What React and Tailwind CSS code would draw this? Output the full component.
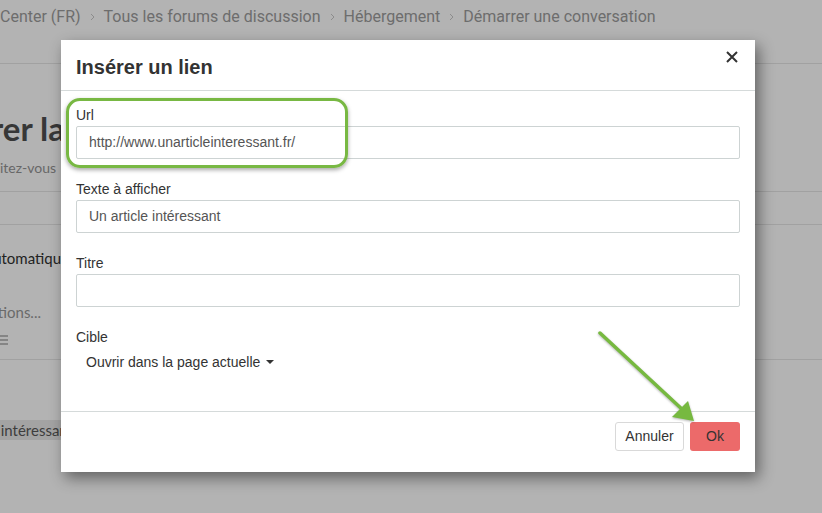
import React from 'react';

function Chevron() {
  return (
    <svg width="5" height="8" viewBox="0 0 5 8" className="mx-[9px] shrink-0">
      <path d="M1 1l3 3-3 3" fill="none" stroke="#8c8c8c" strokeWidth="1" />
    </svg>
  );
}

function Field({ label, value }) {
  return (
    <div className="mb-[20px]">
      <div className="h-[20px] leading-[20px] text-[14px] text-[#333] mb-[1px]">{label}</div>
      <div className="h-[33px] border border-[#cdd3d3] rounded-[2px] px-[12px] flex items-center text-[14px] text-[#555]">
        {value}
      </div>
    </div>
  );
}

export default function App() {
  const crumbs = ['Tous les forums de discussion', 'Hébergement', 'Démarrer une conversation'];

  return (
    <div className="relative w-[822px] h-[513px] overflow-hidden bg-[#b3b3b3]" style={{ fontFamily: 'Lato, "Liberation Sans", sans-serif' }}>
      {/* page behind the overlay */}
      <div className="h-[64px] border-b border-[#a1a1a1]">
        <div className="h-[34px] flex items-center text-[16px] text-[#6d6d6d] whitespace-nowrap" style={{ fontFamily: 'Roboto, sans-serif' }}>
          <span>Center (FR)</span>
          {crumbs.map((c) => (
            <React.Fragment key={c}>
              <Chevron />
              <span>{c}</span>
            </React.Fragment>
          ))}
        </div>
      </div>

      <div className="h-[128px] border-b border-[#a1a1a1] pt-[45px]">
        <div className="w-[65px] flex justify-end overflow-hidden whitespace-nowrap h-[38px] leading-[38px] text-[33px] font-bold text-[#373737]">
          Démarrer la
        </div>
        <div className="mt-[11px] w-[56px] flex justify-end overflow-hidden whitespace-nowrap h-[20px] leading-[20px] text-[14px] text-[#676767]">
          Invitez-vous
        </div>
      </div>

      <div className="h-[33px] border-b border-[#a1a1a1]" />

      <div className="h-[135px] border-b border-[#a1a1a1] pt-[23px]">
        <div className="w-[69px] flex justify-end overflow-hidden whitespace-nowrap h-[20px] leading-[20px] text-[15px] text-[#222]">
          Réponse automatique
        </div>
        <div className="mt-[34px] w-[41px] flex justify-end overflow-hidden whitespace-nowrap h-[20px] leading-[20px] text-[15px] text-[#6a6a6a]">
          Suggestions...
        </div>
        <div className="mt-[8px] h-[20px] flex items-center">
          <svg width="8" height="10" viewBox="0 0 8 10">
            <path d="M0 1h8M0 5h8M0 9h8" stroke="#777" strokeWidth="1.5" />
          </svg>
        </div>
      </div>

      <div className="mt-[60px] w-[73px] h-[20px] bg-[#a3a3a3] flex justify-end overflow-hidden whitespace-nowrap leading-[20px] text-[15px] text-[#3d3d3d]">
        Un article intéressant
      </div>

      {/* modal */}
      <div
        className="absolute left-[61px] top-[40px] w-[694px] h-[432px] bg-white flex flex-col shadow-[4px_6px_14px_rgba(0,0,0,0.45)]"
        style={{ fontFamily: '"Liberation Sans", Arial, sans-serif' }}
      >
        <div className="h-[51px] border-b border-[#d5dada] px-[15px] flex justify-between items-start">
          <div className="mt-[15px] text-[20px] leading-[24px] font-bold text-[#333]">Insérer un lien</div>
          <svg width="12" height="12" viewBox="0 0 12 12" className="mt-[11px] mr-[2px]">
            <path d="M1 1l10 10M11 1L1 11" stroke="#333" strokeWidth="2" />
          </svg>
        </div>

        <div className="flex-1 px-[15px] pt-[14px]">
          <Field label="Url" value="http://www.unarticleinteressant.fr/" />
          <Field label="Texte à afficher" value="Un article intéressant" />
          <Field label="Titre" value="" />
          <div className="h-[20px] leading-[20px] text-[14px] text-[#333]">Cible</div>
          <div className="mt-[5px] pl-[10px] h-[20px] flex items-center text-[14px] text-[#333]">
            Ouvrir dans la page actuelle
            <svg width="8" height="4" viewBox="0 0 8 4" className="ml-[6px]">
              <path d="M0 0h8L4 4z" fill="#333" />
            </svg>
          </div>
        </div>

        <div className="h-[61px] border-t border-[#d5dada] pt-[10px] px-[15px] flex justify-end items-start gap-[6px]">
          <button className="h-[29px] w-[69px] border border-[#d9d9d9] rounded-[3px] bg-white text-[14px] text-[#333]">
            Annuler
          </button>
          <button className="h-[29px] w-[50px] rounded-[3px] bg-[#ec6a6a] text-[14px] text-[#333]">Ok</button>
        </div>
      </div>

      {/* green annotations */}
      <div className="absolute left-[66px] top-[98px] w-[282px] h-[70px] border-[3px] border-[#78b843] rounded-[14px] shadow-[0_2px_4px_rgba(0,0,0,0.35)]" />
      <svg className="absolute left-0 top-0 pointer-events-none drop-shadow-[0_1px_1px_rgba(0,0,0,0.3)]" width="822" height="513">
        <path d="M600 333L684 411" stroke="#77b940" strokeWidth="3.5" strokeLinecap="round" />
        <path d="M694 421L672 417L688 401Z" fill="#77b940" />
      </svg>
    </div>
  );
}
